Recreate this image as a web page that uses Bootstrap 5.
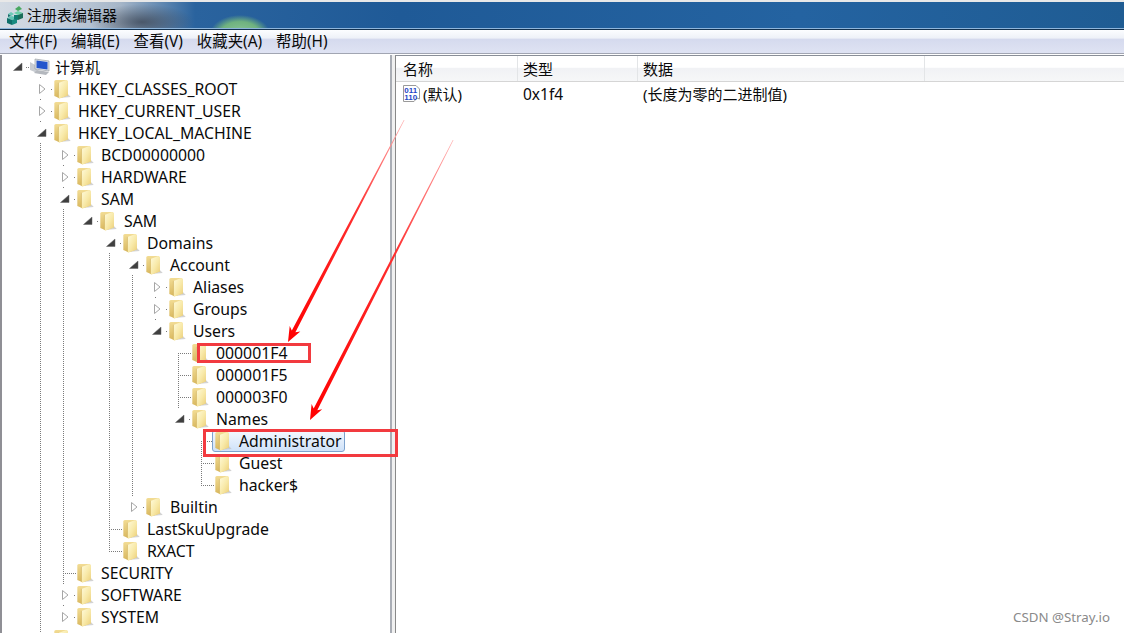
<!DOCTYPE html>
<html lang="zh-CN"><head><meta charset="utf-8"><title>注册表编辑器</title>
<link rel="stylesheet" href="https://cdn.jsdelivr.net/npm/bootstrap@5.3.0/dist/css/bootstrap.min.css">
<style>
html,body{margin:0;height:100%;background:#fff;overflow:hidden}
body{font-family:"Noto Sans","Noto Sans CJK SC",sans-serif;font-size:15px;color:#0a0a0a;line-height:22px}
.regwin{width:1124px;height:633px;position:relative;overflow:hidden}
.topstrip{height:2px;background:#e8e8e8}
.titlebar{height:26px;padding-left:6px;gap:3px;background:
 radial-gradient(ellipse 30px 19px at 240px 32px,#8cc79a 0,#6fb27f 65%,rgba(111,178,127,0) 100%),
 radial-gradient(ellipse 52px 18px at 142px 20px,rgba(60,70,85,.8) 0,rgba(60,70,85,0) 100%),
 linear-gradient(90deg,#d4dbe4 0,#c4cfdc 60px,#a6b6c8 120px,#2a639e 195px,#1f5a97 400px,#2463a1 800px,#1f5c93 1124px)}
.tline{height:2px;background:linear-gradient(#8fb6dc 50%,#14324f 50%)}
.menubar{height:23px;padding-left:9px;font-size:15.4px;background:linear-gradient(#fcfdff 0,#eef1f8 35%,#d5daee 40%,#dfe3f3 100%)}
.menubar span{margin-right:14px}
.mline{height:2px;background:linear-gradient(#a1a5b2 50%,#fff 50%)}
.panes{height:580px}
.treepane{width:392px;border-right:2px solid #a9adb5;border-left:2px solid #8f8f95;padding-top:1px;position:relative;z-index:1;flex:none}
.sash{width:3px;flex:none;background:#f0f0f0}
.listpane{flex:1;border-left:1px solid #888;border-top:1px solid #8a8f98}
.tnode{height:22px}
.lv0{padding-left:8px}.lv1{padding-left:32px}.lv2{padding-left:55px}.lv3{padding-left:78px}.lv4{padding-left:101px}.lv5{padding-left:124px}.lv6{padding-left:147px}.lv7{padding-left:170px}.lv8{padding-left:193px}
.expander{width:16px;height:20px;flex:none;display:block}
.expander.filled{background:#fff}
.fold{width:19px;height:20px;margin-left:2px;flex:none;display:block}
.lbl{margin-left:7px;font-size:15.8px;white-space:nowrap}
.lbl-zh{margin-left:4px;font-size:15px}
.pcic{width:22px;height:20px;margin-left:3px;flex:none}
.sel-lbl{position:relative}
.sel-lbl::before{content:"";position:absolute;left:-27px;right:-3px;top:0;bottom:0;border:1px solid #7da2ce;border-radius:3px;background:linear-gradient(#f4f8fe,#cfe2f9);z-index:-1}
.listhead{height:26px;background:linear-gradient(#fff 0,#fff 45%,#f1f2f5 50%,#f6f7f8 100%);border-bottom:1px solid #d5d5d5}
.colhd{padding-left:7px;border-right:1px solid #e3e5e7;height:100%}
.colhd-n{padding-left:5px}
.cw1{width:122px}.cw2{width:120px}.cw3{width:287px}
.listrow{height:24px}
.colcell{padding-left:5px;white-space:nowrap}
.numcell{font-size:15.5px}
.firstcell{padding-left:6px;gap:2px}
.binic{width:19px;height:20px;flex:none}
.overlay{position:absolute;left:0;top:0;width:1124px;height:633px;pointer-events:none}
.ov-lines{z-index:0}.ov-marks{z-index:3}
.wmark{position:absolute;right:14px;bottom:7px;font-size:13.3px;color:#8a8a8a;z-index:4;line-height:18px}
</style></head><body>
<svg width="0" height="0" class="position-absolute">
<defs>
<linearGradient id="fg" x1="0" y1="0" x2="1" y2="1"><stop offset="0" stop-color="#fffbdc"/><stop offset=".55" stop-color="#f8e9a8"/><stop offset="1" stop-color="#eccf78"/></linearGradient>
<linearGradient id="bg2" x1="0" y1="0" x2="0" y2="1"><stop offset="0" stop-color="#f2dc94"/><stop offset="1" stop-color="#d8b75e"/></linearGradient>
<symbol id="folder" viewBox="0 0 18 19.5">
<path d="M7 18.5 18 17.5 15 14.5z" fill="#c4c4c4" opacity=".75"/>
<path d="M2 2.5Q2 1 3.5 1H13.5Q15 1 15 2.5V16L7 18.8 2 16.5z" fill="url(#bg2)"/>
<path d="M6 3.8 13.2 1.2Q15.2 .8 15.2 2.6V15.6Q15.2 16.2 14.6 16.4L7.2 18.9Q6 19.2 6 18z" fill="url(#fg)"/>
<path d="M6 3.8V18.4" stroke="#c9a548" stroke-width=".5"/>
</symbol>
<symbol id="closedx" viewBox="0 0 16 20"><path d="M5.5 5.5 11 10 5.5 14.5z" fill="#fff" stroke="#a6a6a6"/></symbol>
<symbol id="openx" viewBox="0 0 16 20"><path d="M12 6V13.5H3.5z" fill="#3f3f3f" stroke="#666" stroke-width=".5"/></symbol>
</defs></svg>
<div class="regwin">
<div class="topstrip"></div>
<div class="titlebar d-flex align-items-center">
<svg width="18" height="20" viewBox="0 0 18 20" aria-hidden="true"><path d="M1 13 6 11 11 13 6 15z" fill="#5fc4b4"/><path d="M1 13V18L6 20V15z" fill="#0f6f6a"/><path d="M11 13V18L6 20V15z" fill="#188a80"/><path d="M8 8 12 6 17 8 12 10z" fill="#6ad0a8"/><path d="M12 10V15L17 13V8z" fill="#1a6d5a"/><path d="M8 10V14L12 15V10z" fill="#0f7a70"/><path d="M9 4 13 1 16 4 12 6z" fill="#49a860"/><path d="M2 9 5 7 8 9 5 11z" fill="#6ccab8"/><path d="M2 9V12L5 11z" fill="#176e6c"/></svg>
<span>注册表编辑器</span>
</div>
<div class="tline"></div>
<div class="menubar d-flex align-items-center"><span>文件(F)</span><span>编辑(E)</span><span>查看(V)</span><span>收藏夹(A)</span><span>帮助(H)</span></div>
<div class="mline"></div>
<div class="panes d-flex">
<div class="treepane">
<div class="tnode d-flex align-items-center lv0"><svg class="expander filled"><use href="#openx"/></svg><svg class="pcic" viewBox="0 0 22 20"><path d="M1 5 8 9V16L1 13z" fill="#c8ccd2"/><path d="M6 2 20 4V14L6 12z" fill="#dfe3e8" stroke="#8d939b" stroke-width=".6"/><path d="M7.5 3.5 18.5 5V12.5L7.5 11z" fill="#2355cc"/><path d="M8 13 20 15 17 18 5 16z" fill="#b4b8be"/></svg><span class="lbl lbl-zh">计算机</span></div>
<div class="tnode d-flex align-items-center lv1"><svg class="expander filled"><use href="#closedx"/></svg><svg class="fold"><use href="#folder"/></svg><span class="lbl">HKEY_CLASSES_ROOT</span></div>
<div class="tnode d-flex align-items-center lv1"><svg class="expander filled"><use href="#closedx"/></svg><svg class="fold"><use href="#folder"/></svg><span class="lbl">HKEY_CURRENT_USER</span></div>
<div class="tnode d-flex align-items-center lv1"><svg class="expander filled"><use href="#openx"/></svg><svg class="fold"><use href="#folder"/></svg><span class="lbl">HKEY_LOCAL_MACHINE</span></div>
<div class="tnode d-flex align-items-center lv2"><svg class="expander filled"><use href="#closedx"/></svg><svg class="fold"><use href="#folder"/></svg><span class="lbl">BCD00000000</span></div>
<div class="tnode d-flex align-items-center lv2"><svg class="expander filled"><use href="#closedx"/></svg><svg class="fold"><use href="#folder"/></svg><span class="lbl">HARDWARE</span></div>
<div class="tnode d-flex align-items-center lv2"><svg class="expander filled"><use href="#openx"/></svg><svg class="fold"><use href="#folder"/></svg><span class="lbl">SAM</span></div>
<div class="tnode d-flex align-items-center lv3"><svg class="expander filled"><use href="#openx"/></svg><svg class="fold"><use href="#folder"/></svg><span class="lbl">SAM</span></div>
<div class="tnode d-flex align-items-center lv4"><svg class="expander filled"><use href="#openx"/></svg><svg class="fold"><use href="#folder"/></svg><span class="lbl">Domains</span></div>
<div class="tnode d-flex align-items-center lv5"><svg class="expander filled"><use href="#openx"/></svg><svg class="fold"><use href="#folder"/></svg><span class="lbl">Account</span></div>
<div class="tnode d-flex align-items-center lv6"><svg class="expander filled"><use href="#closedx"/></svg><svg class="fold"><use href="#folder"/></svg><span class="lbl">Aliases</span></div>
<div class="tnode d-flex align-items-center lv6"><svg class="expander filled"><use href="#closedx"/></svg><svg class="fold"><use href="#folder"/></svg><span class="lbl">Groups</span></div>
<div class="tnode d-flex align-items-center lv6"><svg class="expander filled"><use href="#openx"/></svg><svg class="fold"><use href="#folder"/></svg><span class="lbl">Users</span></div>
<div class="tnode d-flex align-items-center lv7"><svg class="expander"></svg><svg class="fold"><use href="#folder"/></svg><span class="lbl">000001F4</span></div>
<div class="tnode d-flex align-items-center lv7"><svg class="expander"></svg><svg class="fold"><use href="#folder"/></svg><span class="lbl">000001F5</span></div>
<div class="tnode d-flex align-items-center lv7"><svg class="expander"></svg><svg class="fold"><use href="#folder"/></svg><span class="lbl">000003F0</span></div>
<div class="tnode d-flex align-items-center lv7"><svg class="expander filled"><use href="#openx"/></svg><svg class="fold"><use href="#folder"/></svg><span class="lbl">Names</span></div>
<div class="tnode d-flex align-items-center lv8"><svg class="expander"></svg><svg class="fold"><use href="#folder"/></svg><span class="lbl sel-lbl">Administrator</span></div>
<div class="tnode d-flex align-items-center lv8"><svg class="expander"></svg><svg class="fold"><use href="#folder"/></svg><span class="lbl">Guest</span></div>
<div class="tnode d-flex align-items-center lv8"><svg class="expander"></svg><svg class="fold"><use href="#folder"/></svg><span class="lbl">hacker$</span></div>
<div class="tnode d-flex align-items-center lv5"><svg class="expander filled"><use href="#closedx"/></svg><svg class="fold"><use href="#folder"/></svg><span class="lbl">Builtin</span></div>
<div class="tnode d-flex align-items-center lv4"><svg class="expander"></svg><svg class="fold"><use href="#folder"/></svg><span class="lbl">LastSkuUpgrade</span></div>
<div class="tnode d-flex align-items-center lv4"><svg class="expander"></svg><svg class="fold"><use href="#folder"/></svg><span class="lbl">RXACT</span></div>
<div class="tnode d-flex align-items-center lv2"><svg class="expander"></svg><svg class="fold"><use href="#folder"/></svg><span class="lbl">SECURITY</span></div>
<div class="tnode d-flex align-items-center lv2"><svg class="expander filled"><use href="#closedx"/></svg><svg class="fold"><use href="#folder"/></svg><span class="lbl">SOFTWARE</span></div>
<div class="tnode d-flex align-items-center lv2"><svg class="expander filled"><use href="#closedx"/></svg><svg class="fold"><use href="#folder"/></svg><span class="lbl">SYSTEM</span></div>
<div class="tnode d-flex align-items-center lv1"><svg class="expander"></svg><svg class="fold"><use href="#folder"/></svg></div>
</div>
<div class="sash"></div>
<div class="listpane">
<div class="listhead d-flex"><div class="colhd cw1 d-flex align-items-center">名称</div><div class="colhd colhd-n cw2 d-flex align-items-center">类型</div><div class="colhd colhd-n cw3 d-flex align-items-center">数据</div></div>
<div class="listrow d-flex align-items-center">
<div class="cw1 firstcell d-flex align-items-center"><svg class="binic" viewBox="0 0 19 20"><path d="M1.5 1.5H14L17.5 5V15L15 14 12 17.5H1.5z" fill="#fff" stroke="#9a9a9a"/><text x="2.2" y="9" font-size="8" font-weight="700" fill="#1f46c8" font-family="Liberation Sans">011</text><text x="2.2" y="16" font-size="8" font-weight="700" fill="#1f46c8" font-family="Liberation Sans">110</text></svg><span>(默认)</span></div>
<div class="cw2 colcell numcell">0x1f4</div>
<div class="cw3 colcell">(长度为零的二进制值)</div>
</div>
</div>
</div>
<svg class="overlay ov-lines" aria-hidden="true"><path fill="none" stroke="#7a7a7a" stroke-dasharray="1 1" d="M40.5 77V633M63.5 155V617M109.5 243V551M132.5 265V507M155.5 287V331M178.5 353V419M201.5 441V485M26 67.5H30M49 89.5H53M49 111.5H53M49 133.5H53M72 155.5H76M72 177.5H76M72 199.5H76M95 221.5H99M118 243.5H122M141 265.5H145M164 287.5H168M164 309.5H168M164 331.5H168M178 353.5H192M178 375.5H192M178 397.5H192M187 419.5H191M201 441.5H214M201 463.5H214M201 485.5H214M141 507.5H145M109 529.5H122M109 551.5H122M63 573.5H76M72 595.5H76M72 617.5H76"/></svg>
<svg class="overlay ov-marks" aria-hidden="true">
<defs><linearGradient id="fade1" gradientUnits="userSpaceOnUse" x1="404" y1="120" x2="288" y2="342"><stop offset="0" stop-color="#ffb0b0"/><stop offset=".4" stop-color="#ff3030"/><stop offset="1" stop-color="#f00"/></linearGradient>
<linearGradient id="fade2" gradientUnits="userSpaceOnUse" x1="453" y1="140" x2="310" y2="420"><stop offset="0" stop-color="#ffb0b0"/><stop offset=".4" stop-color="#ff3030"/><stop offset="1" stop-color="#f00"/></linearGradient></defs>
<rect x="198.5" y="344.5" width="111" height="17" fill="none" stroke="#f23a3f" stroke-width="3"/>
<rect x="204.5" y="430.5" width="192" height="25" fill="none" stroke="#f23a3f" stroke-width="3"/>
<path d="M404.5 120 295.4 332.2 300.3 331.5 288 342 289.7 325.9 291.8 330.4 403.8 120z" fill="url(#fade1)"/>
<path d="M453.5 140 317.3 410.2 322.2 409.3 310 420 311.6 403.9 313.7 408.4 452.8 140z" fill="url(#fade2)"/>
</svg>
<div class="wmark">CSDN @Stray.io</div>
</div>
<script src="https://cdn.jsdelivr.net/npm/bootstrap@5.3.0/dist/js/bootstrap.bundle.min.js"></script>
</body></html>
